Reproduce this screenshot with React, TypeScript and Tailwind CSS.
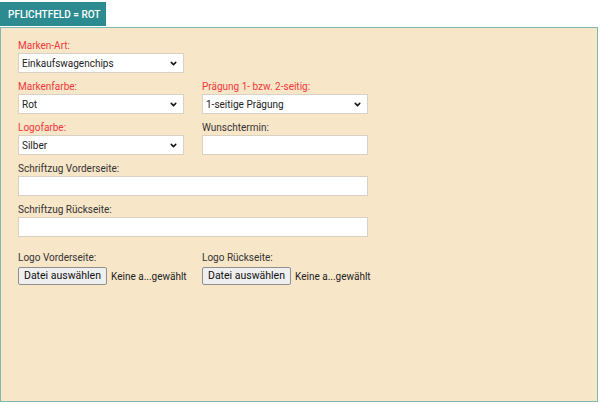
import { ChevronDown } from "lucide-react";

function Label({ text, required }: { text: string; required?: boolean }) {
  return (
    <div
      className={`h-[15px] whitespace-nowrap text-[10px] leading-[15px] ${
        required ? "text-[#f0373a]" : "text-[#333]"
      }`}
    >
      {text}
    </div>
  );
}

function Select({ value }: { value: string }) {
  return (
    <div className="relative h-[20px] w-[166px] border border-[#d9d2c4] bg-white">
      <div className="whitespace-nowrap pl-[3px] text-[10px] leading-[19px] text-[#222]">{value}</div>
      <ChevronDown className="absolute right-[5px] top-[5px] h-[9px] w-[9px] text-[#111]" strokeWidth={4} />
    </div>
  );
}

function FileField({ label }: { label: string }) {
  return (
    <div className="w-[166px]">
      <Label text={label} />
      <div className="mt-[2px] flex items-center gap-[4px] whitespace-nowrap">
        <div className="h-[18px] rounded-[2px] border border-[#8f8f8f] bg-[#efefef] px-[5px] text-[10.5px] leading-[16px] text-[#111]">
          Datei auswählen
        </div>
        <span className="text-[10px] text-[#222]">Keine a...gewählt</span>
      </div>
    </div>
  );
}

export default function App() {
  return (
    <div className="h-[404px] w-[600px] bg-white pt-[2px] font-['Roboto',sans-serif]">
      <div className="flex h-[24px] w-[106px] items-center whitespace-nowrap bg-[#2b8b90] pl-[8px] text-[10px] font-medium text-white">
        PFLICHTFELD = ROT
      </div>
      <div className="mt-[1px] h-[375px] w-[598px] border border-[#7fb8b2] bg-[#f8e6c9] px-[17px] pt-[10px]">
        <div className="flex flex-col gap-[6px]">
          <div>
            <Label text="Marken-Art:" required />
            <Select value="Einkaufswagenchips" />
          </div>
          <div className="flex gap-[18px]">
            <div>
              <Label text="Markenfarbe:" required />
              <Select value="Rot" />
            </div>
            <div>
              <Label text="Prägung 1- bzw. 2-seitig:" required />
              <Select value="1-seitige Prägung" />
            </div>
          </div>
          <div className="flex gap-[18px]">
            <div>
              <Label text="Logofarbe:" required />
              <Select value="Silber" />
            </div>
            <div>
              <Label text="Wunschtermin:" />
              <div className="h-[20px] w-[166px] border border-[#d9d2c4] bg-white" />
            </div>
          </div>
          <div>
            <Label text="Schriftzug Vorderseite:" />
            <div className="h-[20px] w-[350px] border border-[#d9d2c4] bg-white" />
          </div>
          <div>
            <Label text="Schriftzug Rückseite:" />
            <div className="h-[20px] w-[350px] border border-[#d9d2c4] bg-white" />
          </div>
          <div className="mt-[7px] flex gap-[18px]">
            <FileField label="Logo Vorderseite:" />
            <FileField label="Logo Rückseite:" />
          </div>
        </div>
      </div>
    </div>
  );
}
